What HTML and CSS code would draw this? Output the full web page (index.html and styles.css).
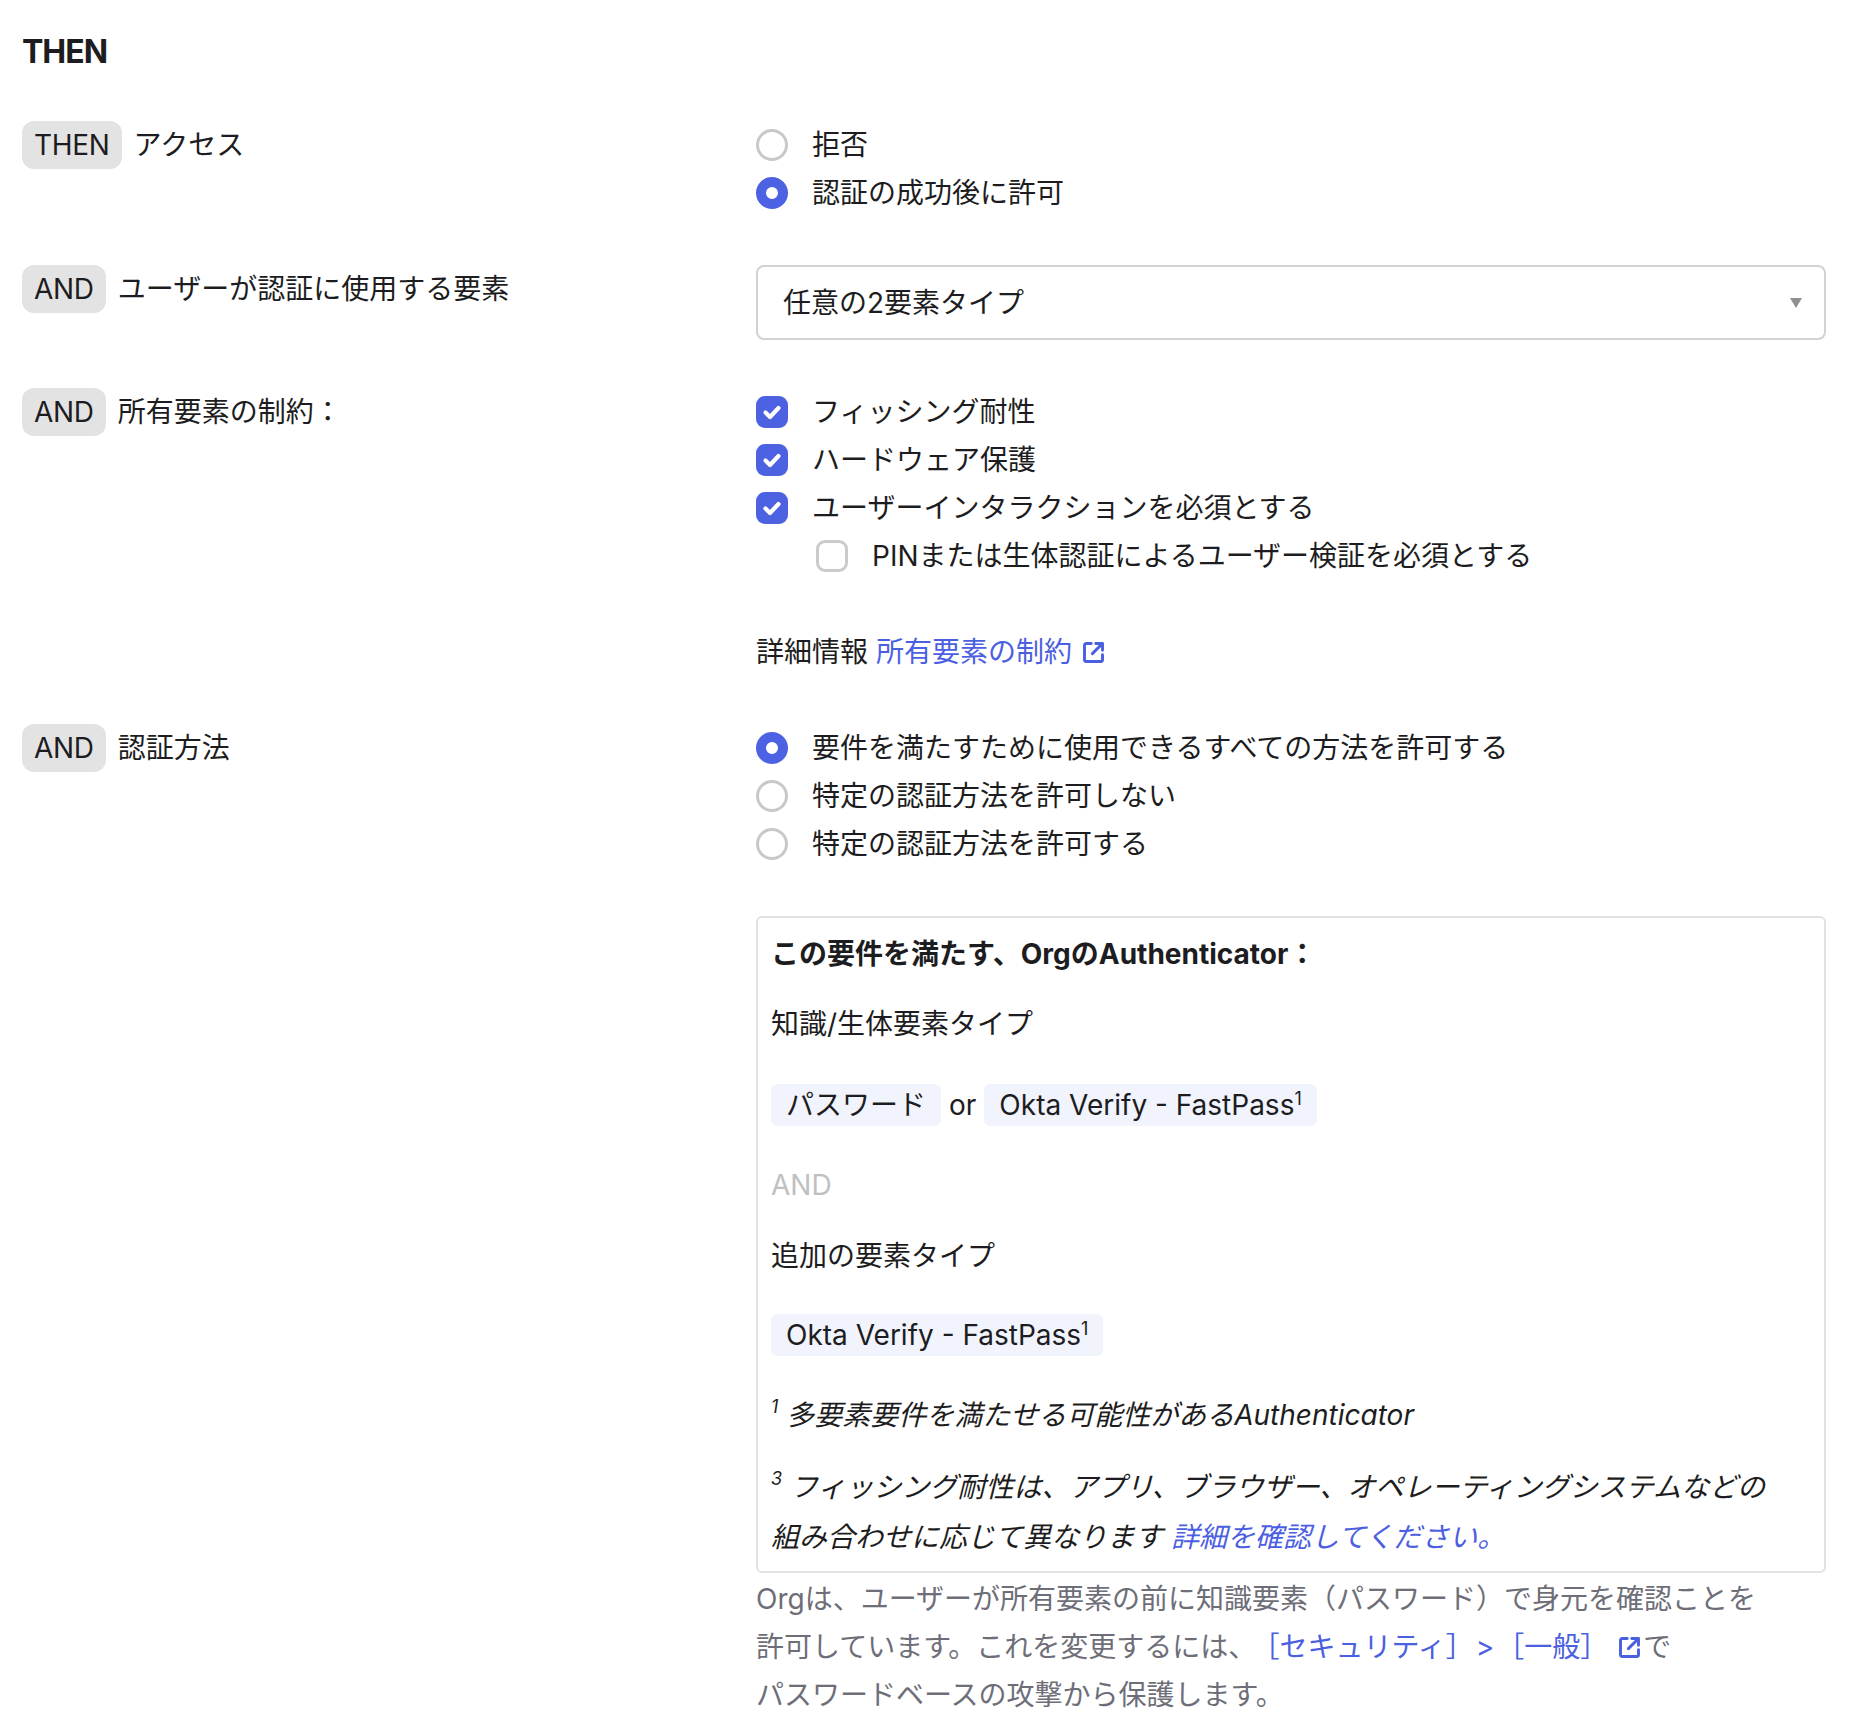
FILE: index.html
```html
<!DOCTYPE html>
<html lang="ja">
<head>
<meta charset="utf-8">
<title>THEN</title>
<link rel="stylesheet" href="styles.css">
</head>
<body>
<main class="page">
  <h2 class="title">THEN</h2>
  <div class="rules">
    <section class="rule">
      <div class="label"><span class="badge">THEN</span><span class="label-text">アクセス</span></div>
      <div class="control">
        <div class="option"><span class="radio"></span><span>拒否</span></div>
        <div class="option"><span class="radio checked"></span><span>認証の成功後に許可</span></div>
      </div>
    </section>

    <section class="rule">
      <div class="label"><span class="badge">AND</span><span class="label-text">ユーザーが認証に使用する要素</span></div>
      <div class="control">
        <div class="select"><span>任意の2要素タイプ</span><span class="caret"></span></div>
      </div>
    </section>

    <section class="rule">
      <div class="label"><span class="badge">AND</span><span class="label-text">所有要素の制約：</span></div>
      <div class="control">
        <div class="option"><span class="check checked"><svg viewBox="0 0 32 32"><path d="M9.5 16.5l4.5 4.5 8.5-9"/></svg></span><span>フィッシング耐性</span></div>
        <div class="option"><span class="check checked"><svg viewBox="0 0 32 32"><path d="M9.5 16.5l4.5 4.5 8.5-9"/></svg></span><span>ハードウェア保護</span></div>
        <div class="option"><span class="check checked"><svg viewBox="0 0 32 32"><path d="M9.5 16.5l4.5 4.5 8.5-9"/></svg></span><span>ユーザーインタラクションを必須とする</span></div>
        <div class="option nested"><span class="check"></span><span>PINまたは生体認証によるユーザー検証を必須とする</span></div>
        <p class="info">詳細情報 <a class="link">所有要素の制約</a> <svg class="ext" viewBox="0 0 24 24"><path d="M10 4H5.5A1.5 1.5 0 0 0 4 5.5v13A1.5 1.5 0 0 0 5.5 20h13a1.5 1.5 0 0 0 1.5-1.5V14"/><path d="M14 4h6v6M20 4l-9 9"/></svg></p>
      </div>
    </section>

    <section class="rule">
      <div class="label"><span class="badge">AND</span><span class="label-text">認証方法</span></div>
      <div class="control">
        <div class="option"><span class="radio checked"></span><span>要件を満たすために使用できるすべての方法を許可する</span></div>
        <div class="option"><span class="radio"></span><span>特定の認証方法を許可しない</span></div>
        <div class="option"><span class="radio"></span><span>特定の認証方法を許可する</span></div>

        <div class="box">
          <p class="box-title">この要件を満たす、OrgのAuthenticator：</p>
          <p class="box-label">知識/生体要素タイプ</p>
          <div class="chips"><span class="chip">パスワード</span><span class="or">or</span><span class="chip">Okta Verify - FastPass<sup>1</sup></span></div>
          <p class="box-and">AND</p>
          <p class="box-label second">追加の要素タイプ</p>
          <div class="chips second"><span class="chip">Okta Verify - FastPass<sup>1</sup></span></div>
          <p class="note first"><sup>1</sup> 多要素要件を満たせる可能性があるAuthenticator</p>
          <p class="note third"><sup>3</sup> フィッシング耐性は、アプリ、ブラウザー、オペレーティングシステムなどの<br>組み合わせに応じて異なります <a class="link">詳細を確認してください。</a></p>
        </div>
        <p class="footer">Orgは、ユーザーが所有要素の前に知識要素（パスワード）で身元を確認ことを<br>許可しています。これを変更するには、<a class="link nav">［セキュリティ］<span class="gt">&gt;</span>［一般］</a> <svg class="ext" viewBox="0 0 24 24"><path d="M10 4H5.5A1.5 1.5 0 0 0 4 5.5v13A1.5 1.5 0 0 0 5.5 20h13a1.5 1.5 0 0 0 1.5-1.5V14"/><path d="M14 4h6v6M20 4l-9 9"/></svg>で<br>パスワードベースの攻撃から保護します。</p>
      </div>
    </section>
  </div>
</main>
</body>
</html>
```

FILE: styles.css
```css
* { box-sizing: border-box; }

html, body {
  margin: 0;
  padding: 0;
  background: #ffffff;
}

body {
  font-family: Inter, "Noto Sans CJK JP", sans-serif;
  font-size: 28px;
  line-height: 48px;
  color: #1d1d21;
}

.page {
  padding: 28px 30px 0 22px;
}

.title {
  margin: 0;
  font-size: 32px;
  line-height: 48px;
  font-weight: 650;
  letter-spacing: -1px;
  color: #1d1d21;
}

.rules {
  margin-top: 45px;
  display: flex;
  flex-direction: column;
  gap: 48px;
}

.rule {
  display: grid;
  grid-template-columns: 734px 1fr;
}

.label {
  display: flex;
  align-items: flex-start;
  gap: 12px;
}

.badge {
  display: inline-block;
  height: 48px;
  line-height: 48px;
  padding: 0 12px 0 12px;
  background: #e3e3e3;
  border-radius: 12px;
  color: #1d1d21;
  letter-spacing: -0.3px;
}

.label-text {
  line-height: 48px;
}

.control {
  min-width: 0;
}

.option {
  display: flex;
  align-items: center;
  gap: 24px;
  height: 48px;
  white-space: nowrap;
}

.option.nested {
  padding-left: 60px;
}

.radio {
  flex: none;
  width: 32px;
  height: 32px;
  border-radius: 50%;
  border: 3px solid #c8c8c8;
  background: #fff;
}

.radio.checked {
  border: 10px solid #4d62e2;
}

.check {
  flex: none;
  width: 32px;
  height: 32px;
  border-radius: 9px;
  border: 3px solid #cbcbcb;
  background: #fff;
  display: flex;
  align-items: center;
  justify-content: center;
}

.check.checked {
  border: none;
  background: #4d62e2;
}

.check svg {
  width: 32px;
  height: 32px;
  fill: none;
  stroke: #fff;
  stroke-width: 4.2;
  stroke-linecap: round;
  stroke-linejoin: round;
}

.info {
  margin: 48px 0 0;
  white-space: nowrap;
}

.link {
  color: #4b60e1;
  text-decoration: none;
}

.link.nav {
  margin-left: 9px;
}

.gt {
  display: inline-block;
  padding: 0 2px;
}

.ext {
  width: 27px;
  height: 27px;
  vertical-align: -4px;
  fill: none;
  stroke: #4b60e1;
  stroke-width: 2.6;
  stroke-linecap: round;
  stroke-linejoin: round;
}

.select {
  height: 75px;
  border: 2px solid #d2d2d2;
  border-radius: 8px;
  padding: 0 22px 0 25px;
  display: flex;
  align-items: center;
  justify-content: space-between;
}

.caret {
  width: 0;
  height: 0;
  border-left: 6px solid transparent;
  border-right: 6px solid transparent;
  border-top: 10px solid #909090;
}

.box {
  margin-top: 48px;
  border: 2px solid #e2e2e2;
  border-radius: 6px;
  padding: 12px 13px 9px;
}

.box p { margin: 0; }

.box-title {
  font-weight: 700;
}

.box-label {
  margin-top: 22px !important;
}

.box-label.second {
  margin-top: 23px !important;
}

.chips {
  display: flex;
  align-items: center;
  gap: 8px;
  margin-top: 33px;
  height: 48px;
}

.chips.second {
  margin-top: 31px;
}

.chip {
  height: 42px;
  line-height: 42px;
  padding: 0 15px;
  background: #f1f3fd;
  border-radius: 6px;
  white-space: nowrap;
}

.or {
  line-height: 42px;
}

sup {
  font-size: 18px;
  line-height: 0;
  vertical-align: 10px;
}

.box-and {
  margin-top: 32px !important;
  color: #c0c0c0;
}

.note {
  font-style: italic;
  white-space: nowrap;
}

.note.first {
  margin-top: 32px !important;
}

.note.third {
  margin-top: 23px !important;
  line-height: 50px;
}

.note sup {
  vertical-align: 12px;
}

.footer {
  margin: 2px 0 0;
  color: #6e6e78;
  white-space: nowrap;
}
```
